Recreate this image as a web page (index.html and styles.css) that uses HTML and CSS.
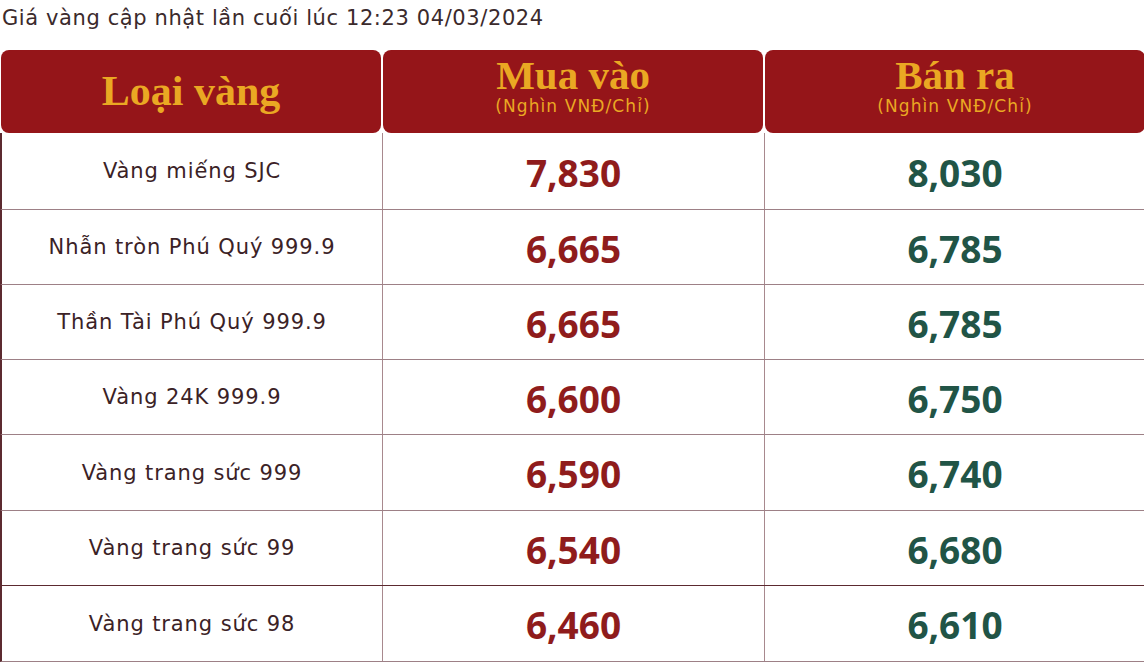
FILE: index.html
```html
<!DOCTYPE html>
<html lang="vi">
<head>
<meta charset="utf-8">
<title>Giá vàng</title>
<link rel="stylesheet" href="styles.css">
</head>
<body>
<p class="updated">Giá vàng cập nhật lần cuối lúc 12:23 04/03/2024</p>
<div class="price-table">
  <div class="head">
    <div class="hcell single"><span class="htitle big">Loại vàng</span></div>
    <div class="hcell"><span class="htitle">Mua vào</span><span class="hsub">(Nghìn VNĐ/Chỉ)</span></div>
    <div class="hcell"><span class="htitle">Bán ra</span><span class="hsub">(Nghìn VNĐ/Chỉ)</span></div>
  </div>
  <div class="row r1"><div class="cell name">Vàng miếng SJC</div><div class="cell buy">7,830</div><div class="cell sell">8,030</div></div>
  <div class="row"><div class="cell name">Nhẫn tròn Phú Quý 999.9</div><div class="cell buy">6,665</div><div class="cell sell">6,785</div></div>
  <div class="row"><div class="cell name">Thần Tài Phú Quý 999.9</div><div class="cell buy">6,665</div><div class="cell sell">6,785</div></div>
  <div class="row"><div class="cell name">Vàng 24K 999.9</div><div class="cell buy">6,600</div><div class="cell sell">6,750</div></div>
  <div class="row tall"><div class="cell name">Vàng trang sức 999</div><div class="cell buy">6,590</div><div class="cell sell">6,740</div></div>
  <div class="row dark"><div class="cell name">Vàng trang sức 99</div><div class="cell buy">6,540</div><div class="cell sell">6,680</div></div>
  <div class="row tall"><div class="cell name">Vàng trang sức 98</div><div class="cell buy">6,460</div><div class="cell sell">6,610</div></div>
</div>
</body>
</html>
```
FILE: styles.css
```css
html, body {
  margin: 0;
  padding: 0;
  background: #ffffff;
}
body {
  font-family: "DejaVu Sans", "Open Sans", sans-serif;
  color: #3b2226;
}
.updated {
  margin: 0;
  height: 50px;
  padding: 5px 0 0 2px;
  box-sizing: border-box;
  font-size: 21px;
  line-height: 26px;
  letter-spacing: 0.6px;
  color: #3b2a2c;
}
.price-table {
  width: 1146px;
}
.head {
  display: grid;
  grid-template-columns: 380px 380px 380px;
  column-gap: 2px;
  padding-left: 1px;
  height: 83px;
}
.hcell {
  background: #951519;
  border-radius: 8px;
  display: flex;
  flex-direction: column;
  align-items: center;
  justify-content: flex-start;
  padding-top: 8px;
  box-sizing: border-box;
  color: #eaa823;
}
.hcell.single {
  justify-content: center;
  padding-top: 0;
}
.htitle {
  font-family: "Liberation Serif", "DejaVu Serif", serif;
  font-weight: bold;
  font-size: 41px;
  line-height: 34px;
}
.htitle.big {
  font-size: 42px;
  line-height: 40px;
  margin-top: -2px;
}
.hsub {
  font-size: 17px;
  line-height: 18px;
  letter-spacing: 1.1px;
  margin-top: 5px;
}
.row {
  display: grid;
  grid-template-columns: 381px 382px 381px;
  height: 75px;
  border-left: 2px solid #5c2a30;
  border-bottom: 1px solid #9d8086;
  box-sizing: border-box;
}
.row.r1 {
  height: 77px;
}
.row.tall {
  height: 76px;
}
.row.dark {
  border-bottom-color: #5c2a30;
}
.cell {
  display: flex;
  align-items: center;
  justify-content: center;
  border-right: 1px solid #a8898e;
}
.name {
  font-size: 21px;
  letter-spacing: 0.9px;
  color: #3b2226;
}
.buy, .sell {
  font-family: "Open Sans", "DejaVu Sans", sans-serif;
  font-size: 37px;
  font-weight: 700;
  padding-top: 2px;
}
.buy {
  color: #8f1c1c;
}
.sell {
  color: #215446;
}
```
